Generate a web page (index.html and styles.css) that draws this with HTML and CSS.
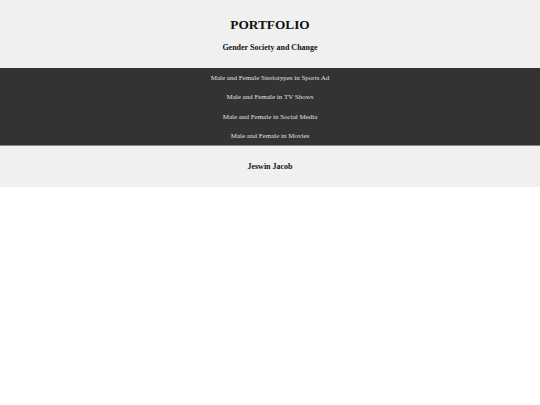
FILE: index.html
```html
<!DOCTYPE html>
<html>
<head>
<meta charset="utf-8">
<link rel="stylesheet" href="styles.css">
</head>
<body>
<header class="header">
  <h1 class="title">PORTFOLIO</h1>
  <h2 class="subtitle">Gender Society and Change</h2>
</header>
<nav class="nav">
  <a class="nav-item" href="#">Male and Female Steriotypes in Sports Ad</a>
  <a class="nav-item" href="#">Male and Female in TV Shows</a>
  <a class="nav-item" href="#">Male and Female in Social Media</a>
  <a class="nav-item" href="#">Male and Female in Movies</a>
</nav>
<footer class="footer">
  <h3 class="author">Jeswin Jacob</h3>
</footer>
</body>
</html>
```
FILE: styles.css
```css
html, body {
  margin: 0;
  padding: 0;
  background: #ffffff;
  font-family: "Liberation Serif", "Times New Roman", serif;
}
.header {
  background: #f0f0f0;
  height: 68px;
  display: flex;
  flex-direction: column;
  align-items: center;
  box-sizing: border-box;
  padding-top: 17px;
}
.title {
  margin: 0;
  font-size: 13.3px;
  line-height: 16px;
  font-weight: bold;
  color: #111;
}
.subtitle {
  margin: 10px 0 0;
  font-size: 8px;
  line-height: 10px;
  font-weight: bold;
  color: #111;
}
.nav {
  background: #333333;
  height: 78px;
  border-bottom: 1px solid #888;
  display: flex;
  flex-direction: column;
  align-items: center;
  box-sizing: border-box;
  padding-top: 1px;
}
.nav-item {
  display: block;
  color: #e0e0e0;
  text-decoration: none;
  font-size: 7px;
  line-height: 19.4px;
}
.footer {
  background: #f0f0f0;
  height: 41px;
  display: flex;
  align-items: center;
  justify-content: center;
}
.author {
  margin: 0;
  font-size: 8px;
  font-weight: bold;
  color: #111;
}
```
